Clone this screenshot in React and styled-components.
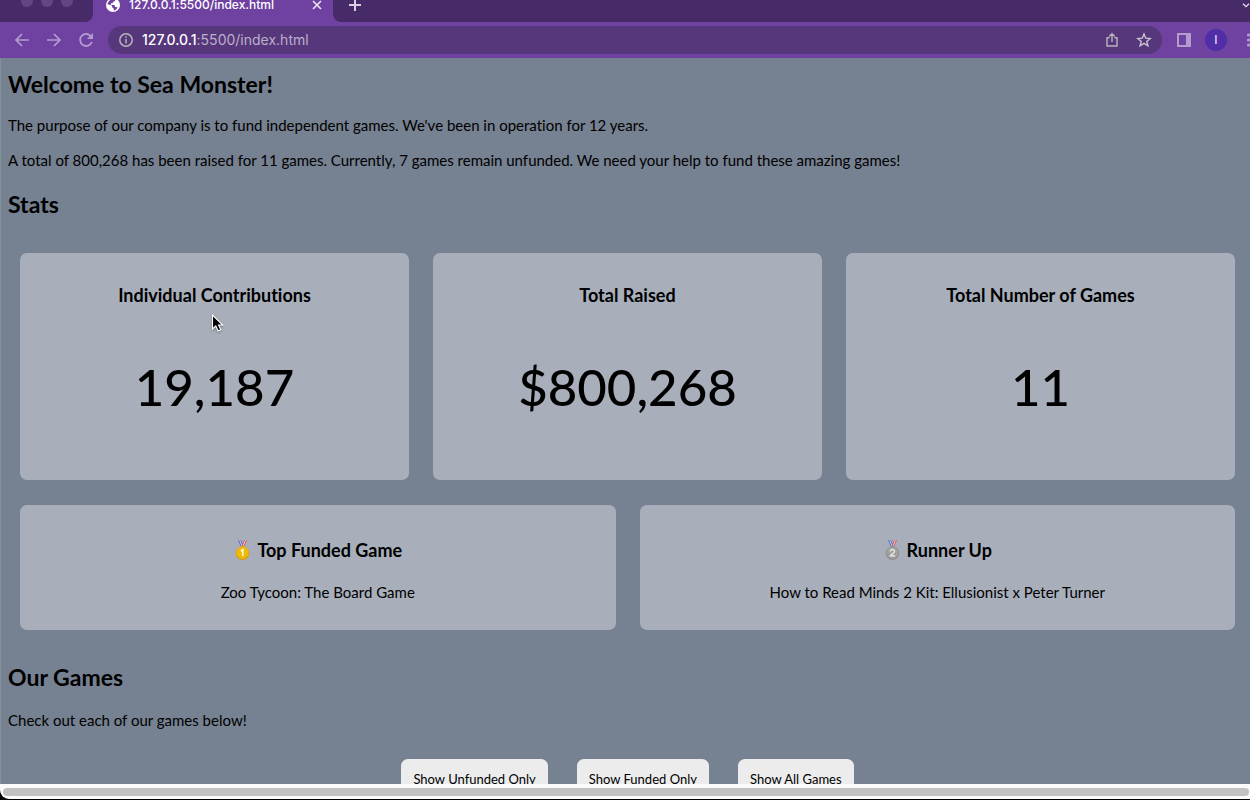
import React from "react";
import styled, { createGlobalStyle } from "styled-components";

const GlobalStyle = createGlobalStyle`
  *, *::before, *::after { box-sizing: border-box; }
  html, body { margin: 0; background: #000; }
  body { font-family: Lato, sans-serif; font-size: 15px; font-variant-ligatures: none; color: #000; }
`;

const Window = styled.div`
  display: flex;
  flex-direction: column;
  height: 100vh;
  overflow: hidden;
  border-bottom: 1px solid #000;
`;

/* Browser frame */

const TabStrip = styled.div`
  display: flex;
  height: 22px;
  flex: none;
  background: #6f41a1;
  font-family: Inter, sans-serif;
`;

const WindowControls = styled.div`
  display: flex;
  gap: 8px;
  width: 93px;
  padding-left: 21px;
  background: #472b68;
  border-bottom-right-radius: 8px;
`;

const ControlDot = styled.span`
  width: 12px;
  height: 7px;
  border-radius: 0 0 6px 6px;
  background: #624582;
`;

const Tab = styled.div`
  display: flex;
  align-items: center;
  width: 240px;
  height: 10px;
  padding: 0 8px 0 13px;
`;

const TabTitle = styled.span`
  flex: 1;
  padding-left: 9px;
  font-size: 12px;
  line-height: 10px;
  font-weight: 500;
  color: #fff;
`;

const TabStripRest = styled.div`
  display: flex;
  flex: 1;
  align-items: flex-start;
  justify-content: space-between;
  padding-left: 14px;
  background: #472b68;
  border-bottom-left-radius: 8px;
`;

const IconButton = styled.button`
  display: flex;
  align-items: center;
  justify-content: center;
  flex: none;
  width: 16px;
  height: 16px;
  padding: 0;
  border: 0;
  background: none;
  color: ${(p) => p.$color || "#b59ccf"};
`;

const TabStripButton = styled(IconButton)`
  height: 10px;
  width: 16px;
`;

const MoreTabsButton = styled(TabStripButton)`
  width: 8px;
  justify-content: flex-start;
  overflow: hidden;
`;

const Toolbar = styled.div`
  display: flex;
  align-items: center;
  flex: none;
  height: 36px;
  padding-left: 14px;
  background: #6f41a1;
  overflow: hidden;
`;

const NavButtons = styled.div`
  display: flex;
  gap: 16px;
  margin-right: 14px;
`;

const AddressBar = styled.div`
  display: flex;
  flex: 1;
  align-items: center;
  height: 28px;
  padding: 0 10px;
  border-radius: 14px;
  background: #57377b;
  font-family: Inter, sans-serif;
`;

const Address = styled.div`
  flex: 1;
  padding-left: 8px;
  font-size: 14px;
  line-height: 20px;
  color: #bcafca;
`;

const Host = styled.span`
  color: #fff;
  font-weight: 500;
`;

const AddressActions = styled.div`
  display: flex;
  gap: 16px;
`;

const ToolbarActions = styled.div`
  display: flex;
  align-items: center;
  gap: 13px;
  flex: none;
  width: 88px;
  padding-left: 14px;
  overflow: hidden;
`;

const Avatar = styled.button`
  flex: none;
  width: 22px;
  height: 22px;
  padding: 0;
  border: 0;
  border-radius: 50%;
  background: #512da8;
  color: #e2d9f2;
  font: 500 12px/22px Inter, sans-serif;
`;

/* Site */

const Page = styled.main`
  position: relative;
  flex: 1;
  min-height: 0;
  padding: 10px 3px 0 7px;
  overflow: hidden;
  background: #768191;
  border-left: 1px solid #82919b;
`;

const Heading = styled.h2`
  margin: 0;
  font-size: 23px;
  line-height: 32px;
  font-weight: 700;
`;

const Text = styled.p`
  margin: 16px 0 0;
  font-size: 15px;
  line-height: 19px;
`;

const Intro = styled.section`
  margin-bottom: 18px;
`;

const CardGrid = styled.div`
  display: grid;
  grid-template-columns: repeat(${(p) => p.$columns}, 1fr);
  gap: 24px;
  margin: ${(p) => p.$top}px 12px 0;
`;

const Card = styled.article`
  min-height: ${(p) => p.$height}px;
  padding: ${(p) => p.$pad}px 12px 0;
  border-radius: 7px;
  background: #a8afbb;
  text-align: center;
`;

const CardTitle = styled.h3`
  display: flex;
  align-items: center;
  justify-content: center;
  gap: 5px;
  margin: 0;
  font-size: 18px;
  line-height: 24px;
  font-weight: 700;
`;

const BigNumber = styled.p`
  margin: 48px 0 0;
  font-size: 51px;
  line-height: 64px;
  font-weight: 500;
`;

const Winner = styled.p`
  margin: 20px 0 0;
  font-size: 15px;
  line-height: 20px;
`;

const Games = styled.section`
  margin-top: 31px;
  & > ${Text} { margin-top: 18px; }
`;

const FilterRow = styled.div`
  display: flex;
  justify-content: center;
  gap: 29px;
  margin-top: 29px;
`;

const FilterButton = styled.button`
  flex: none;
  height: 40px;
  padding: 0 12px;
  border: 0;
  border-radius: 7px;
  background: #ececec;
  color: #000;
  font: 400 13px/20px Lato, sans-serif;
`;

const Pointer = styled.svg`
  position: absolute;
  left: 210px;
  top: 256px;
  filter: drop-shadow(0 1px 1px rgba(0, 0, 0, 0.35));
`;

const ScrollTrack = styled.div`
  flex: none;
  height: 15px;
  padding: 4px 1px 3px 3px;
  background: #fafafa;
  border-bottom-left-radius: 9px;
`;

const ScrollThumb = styled.div`
  height: 8px;
  border-radius: 4px;
  background: #c1c1c1;
`;

const Stroke = ({ size = 16, width = 2, children }) => (
  <svg width={size} height={size} viewBox="0 0 16 16" fill="none" stroke="currentColor" strokeWidth={width} aria-hidden="true">
    {children}
  </svg>
);

const Globe = () => (
  <svg width="14" height="14" viewBox="0 0 14 14" aria-hidden="true">
    <circle cx="7" cy="7" r="7" fill="#fff" />
    <path d="M5.8 1.4L9.4 1.5 8.8 3.2 6.9 3.7 6.8 5.2 4.8 5.3 5 7 8.4 7.1 9.2 8.9 11.6 9.2C10.8 11 9.4 12.2 7.8 12.5L7.7 10.6 6.1 9.5 6 8 1.5 6.5C1.9 4 3.4 2 5.8 1.4Z" fill="#6f41a1" />
    <path d="M1.5 6.2L5.1 7.3 6 8.1 6.1 9.5 7.2 10.6V12.5C4 12.4 1.4 10 1.5 6.2Z" fill="#fff" />
  </svg>
);

const Medal = ({ place, light, dark }) => (
  <svg width="19" height="20" viewBox="0 0 19 20" role="img" aria-label={`Place ${place}`}>
    <path d="M5 0H8L11 7H8Z" fill="#5268cf" />
    <path d="M6.2 0H7L9.8 7H9Z" fill="#e9e4ef" />
    <path d="M11 0H14L11 7H8.5Z" fill="#d8525f" />
    <path d="M12 0H12.8L10.2 7H9.4Z" fill="#eee6ef" />
    <rect x="8" y="5.5" width="3.4" height="2" rx="1" fill={dark} />
    <circle cx="9.5" cy="13.2" r="6.8" fill={dark} />
    <circle cx="9.5" cy="12.8" r="6.1" fill={light} />
    {place === 1 ? (
      <path d="M7.7 11L9.8 9.7V16" fill="none" stroke="#fff5bd" strokeWidth="1.8" />
    ) : (
      <path d="M7.2 11.4C7.4 8.7 11.8 9 11.5 11.5C11.3 13 8.4 14.1 7.5 15.7H12" fill="none" stroke="#e7e7e7" strokeWidth="1.5" />
    )}
  </svg>
);

const stats = [
  { title: "Individual Contributions", value: "19,187" },
  { title: "Total Raised", value: "$800,268" },
  { title: "Total Number of Games", value: "11" },
];

const filters = ["Show Unfunded Only", "Show Funded Only", "Show All Games"];

function BrowserFrame() {
  return (
    <>
      <TabStrip>
        <WindowControls>
          <ControlDot />
          <ControlDot />
          <ControlDot />
        </WindowControls>
        <Tab>
          <Globe />
          <TabTitle>127.0.0.1:5500/index.html</TabTitle>
          <TabStripButton $color="#eee6f5" aria-label="Close tab">
            <Stroke width={1.6}><path d="M4 4L12 12M12 4L4 12" /></Stroke>
          </TabStripButton>
        </Tab>
        <TabStripRest>
          <TabStripButton $color="#d8cfe1" aria-label="New tab">
            <Stroke><path d="M8 2V14M2 8H14" /></Stroke>
          </TabStripButton>
          <MoreTabsButton $color="#e4dcec" aria-label="Search tabs">
            <svg width="12" height="8" viewBox="0 0 12 8" fill="none" stroke="currentColor" strokeWidth="2" aria-hidden="true">
              <path d="M1.5 2L6 6.5L10.5 2" />
            </svg>
          </MoreTabsButton>
        </TabStripRest>
      </TabStrip>
      <Toolbar>
        <NavButtons>
          <IconButton aria-label="Back">
            <Stroke width={1.7}><path d="M15 8H2M8 2L2 8L8 14" /></Stroke>
          </IconButton>
          <IconButton aria-label="Forward">
            <Stroke width={1.7}><path d="M1 8H14M8 2L14 8L8 14" /></Stroke>
          </IconButton>
          <IconButton aria-label="Reload">
            <Stroke width={1.8}>
              <path d="M13.2 4.7A6 6 0 1 0 13.8 10" />
              <path d="M15 1V7H9Z" fill="currentColor" stroke="none" />
            </Stroke>
          </IconButton>
        </NavButtons>
        <AddressBar>
          <IconButton $color="#b9b5b9" aria-label="Site information">
            <Stroke width={1.5}>
              <circle cx="8" cy="8" r="6.2" />
              <path d="M8 7V11.5M8 4.3V5.8" />
            </Stroke>
          </IconButton>
          <Address><Host>127.0.0.1</Host>:5500/index.html</Address>
          <AddressActions>
            <IconButton $color="#b9b5b9" aria-label="Share">
              <Stroke width={1.4}>
                <path d="M5.5 5.7H3V14H13V5.7H10.5M8 10V2M5.2 4.5L8 1.8L10.8 4.5" />
              </Stroke>
            </IconButton>
            <IconButton $color="#c8c0ce" aria-label="Bookmark">
              <Stroke width={1.4}>
                <path d="M8 2L9.7 6.1L14.2 6.5L10.8 9.4L11.9 13.8L8 11.4L4.1 13.8L5.2 9.4L1.8 6.5L6.3 6.1Z" />
              </Stroke>
            </IconButton>
          </AddressActions>
        </AddressBar>
        <ToolbarActions>
          <IconButton aria-label="Side panel">
            <svg width="14" height="14" viewBox="0 0 14 14" aria-hidden="true">
              <path d="M0 0H14V14H0ZM2 2V12H9V2Z" fill="currentColor" fillRule="evenodd" />
            </svg>
          </IconButton>
          <Avatar aria-label="Profile">I</Avatar>
          <IconButton aria-label="Menu">
            <svg width="16" height="16" viewBox="0 0 16 16" fill="currentColor" aria-hidden="true">
              <circle cx="8.5" cy="3" r="1.6" />
              <circle cx="8.5" cy="8" r="1.6" />
              <circle cx="8.5" cy="13" r="1.6" />
            </svg>
          </IconButton>
        </ToolbarActions>
      </Toolbar>
    </>
  );
}

export default function App() {
  return (
    <Window>
      <GlobalStyle />
      <BrowserFrame />
      <Page>
        <Intro>
          <Heading>Welcome to Sea Monster!</Heading>
          <Text>The purpose of our company is to fund independent games. We've been in operation for 12 years.</Text>
          <Text>A total of 800,268 has been raised for 11 games. Currently, 7 games remain unfunded. We need your help to fund these amazing games!</Text>
        </Intro>
        <Heading>Stats</Heading>
        <CardGrid $columns={3} $top={33}>
          {stats.map((s) => (
            <Card key={s.title} $height={227} $pad={30}>
              <CardTitle>{s.title}</CardTitle>
              <BigNumber>{s.value}</BigNumber>
            </Card>
          ))}
        </CardGrid>
        <CardGrid $columns={2} $top={25}>
          <Card $height={125} $pad={33}>
            <CardTitle><Medal place={1} light="#edb90d" dark="#d99d06" />Top Funded Game</CardTitle>
            <Winner>Zoo Tycoon: The Board Game</Winner>
          </Card>
          <Card $height={125} $pad={33}>
            <CardTitle><Medal place={2} light="#a0a0a0" dark="#8b8b8b" />Runner Up</CardTitle>
            <Winner>How to Read Minds 2 Kit: Ellusionist x Peter Turner</Winner>
          </Card>
        </CardGrid>
        <Games>
          <Heading>Our Games</Heading>
          <Text>Check out each of our games below!</Text>
          <FilterRow>
            {filters.map((f) => <FilterButton key={f}>{f}</FilterButton>)}
          </FilterRow>
        </Games>
        <Pointer width="14" height="19" viewBox="0 0 14 19" aria-hidden="true">
          <path d="M1.5 1V15L4.8 12L7.2 17L9.8 15.8L7.5 11H11.7Z" fill="#000" stroke="#fff" strokeWidth="1.1" />
        </Pointer>
      </Page>
      <ScrollTrack><ScrollThumb /></ScrollTrack>
    </Window>
  );
}
